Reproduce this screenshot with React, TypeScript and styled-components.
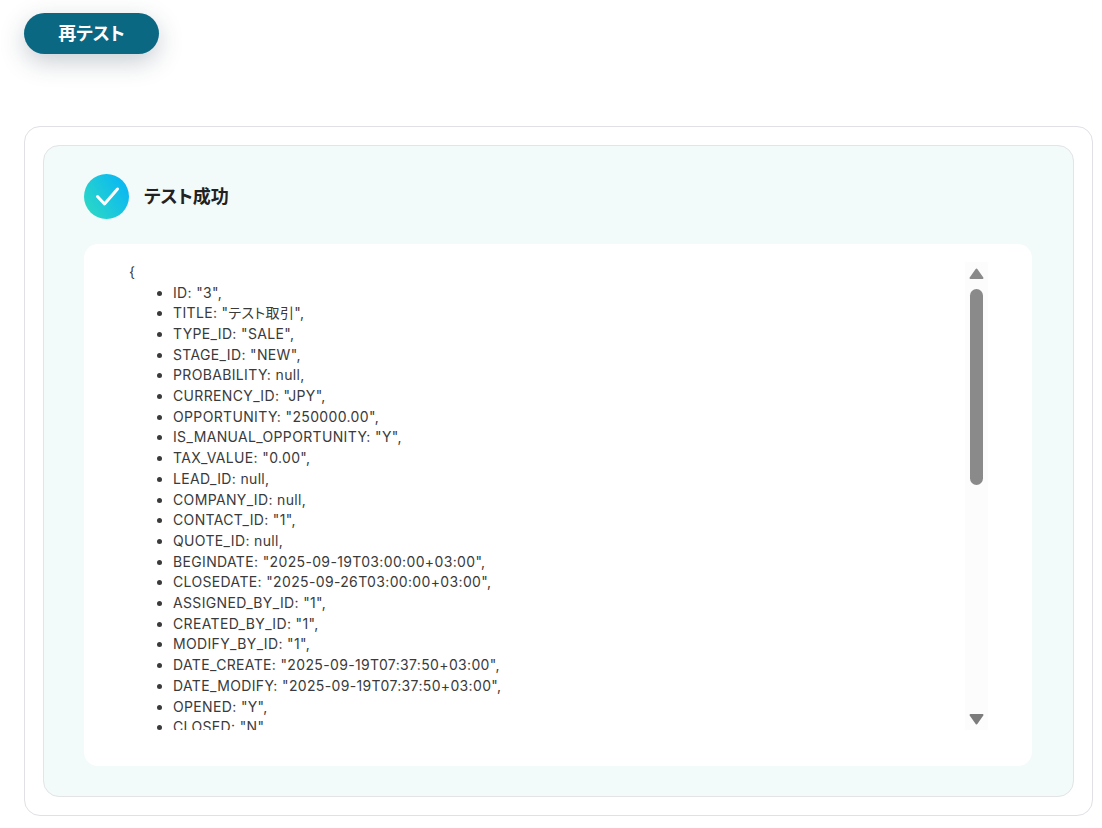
import styled, {createGlobalStyle} from "styled-components"

const GlobalStyle = createGlobalStyle`
  html, body {
    margin: 0;
    padding: 0;
    background: #fff;
  }
  body {
    font-family: Inter, "Noto Sans CJK JP", sans-serif;
    font-feature-settings: "palt";
    color: #2a2a2a;
  }
`

const Page = styled.div`
  width: 1102px;
  height: 828px;
  overflow: hidden;
  box-sizing: border-box;
  padding: 13px 9px 0 24px;
`

const RetestButton = styled.button`
  display: block;
  width: 135px;
  height: 41px;
  padding: 0 0 4px;
  border: none;
  border-radius: 21px;
  background: #0b6883;
  color: #fff;
  font-family: Inter, "Noto Sans CJK JP", sans-serif;
  font-feature-settings: "palt";
  font-size: 18px;
  font-weight: 700;
  box-shadow: 0 8px 24px rgba(40, 60, 80, 0.25);
`

const OuterCard = styled.section`
  margin-top: 72px;
  box-sizing: border-box;
  height: 690px;
  padding: 18px;
  border: 1px solid #e0e0e6;
  border-radius: 16px;
  background: #fff;
`

const ResultPanel = styled.div`
  box-sizing: border-box;
  height: 652px;
  padding: 28px 41px 30px 40px;
  border: 1px solid #e2e4e6;
  border-radius: 16px;
  background: #f2fafa;
`

const ResultHeader = styled.div`
  display: flex;
  align-items: center;
  gap: 15px;
  height: 45px;
`

const StatusIcon = styled.svg`
  width: 45px;
  height: 45px;
  flex: none;
`

const ResultTitle = styled.h2`
  margin: 0 0 3px;
  font-size: 18px;
  font-weight: 700;
  color: #222;
`

const OutputBox = styled.div`
  margin-top: 25px;
  box-sizing: border-box;
  height: 522px;
  padding: 18px 44px 36px 45px;
  display: flex;
  border-radius: 14px;
  background: #fff;
`

const OutputText = styled.div`
  flex: 1;
  height: 468px;
  overflow: hidden;
  font-size: 14px;
  letter-spacing: 0.35px;
  line-height: 20.7px;
  color: #3a3a3a;
`

const Brace = styled.div`
  height: 20.5px;
`

const FieldList = styled.ul`
  margin: 0;
  padding: 0 0 0 44px;
`

const ScrollTrack = styled.div`
  position: relative;
  width: 23px;
  height: 468px;
  flex: none;
  background: #fcfcfc;
`

const ScrollArrow = styled.svg<{$bottom?: boolean}>`
  position: absolute;
  left: 4px;
  width: 15px;
  height: 12px;
  ${props => (props.$bottom ? "bottom: 5px;" : "top: 6px;")}
`

const ScrollThumb = styled.div`
  position: absolute;
  left: 5px;
  top: 27px;
  width: 13px;
  height: 196px;
  border-radius: 7px;
  background: #8a8a8a;
`

const fields = [
  'ID: "3",',
  'TITLE: "テスト取引",',
  'TYPE_ID: "SALE",',
  'STAGE_ID: "NEW",',
  "PROBABILITY: null,",
  'CURRENCY_ID: "JPY",',
  'OPPORTUNITY: "250000.00",',
  'IS_MANUAL_OPPORTUNITY: "Y",',
  'TAX_VALUE: "0.00",',
  "LEAD_ID: null,",
  "COMPANY_ID: null,",
  'CONTACT_ID: "1",',
  "QUOTE_ID: null,",
  'BEGINDATE: "2025-09-19T03:00:00+03:00",',
  'CLOSEDATE: "2025-09-26T03:00:00+03:00",',
  'ASSIGNED_BY_ID: "1",',
  'CREATED_BY_ID: "1",',
  'MODIFY_BY_ID: "1",',
  'DATE_CREATE: "2025-09-19T07:37:50+03:00",',
  'DATE_MODIFY: "2025-09-19T07:37:50+03:00",',
  'OPENED: "Y",',
  'CLOSED: "N",',
  "COMMENTS: null,"
]

export default function App() {
  return (
    <Page>
      <GlobalStyle />
      <RetestButton>再テスト</RetestButton>
      <OuterCard>
        <ResultPanel>
          <ResultHeader>
            <StatusIcon viewBox="0 0 45 45">
              <defs>
                <linearGradient id="statusGradient" x1="0" y1="1" x2="1" y2="0.35">
                  <stop offset="0" stopColor="#2fdcc0" />
                  <stop offset="1" stopColor="#0bb8f2" />
                </linearGradient>
              </defs>
              <circle cx="22.5" cy="22.5" r="22.5" fill="url(#statusGradient)" />
              <path d="M13.5 22.5 20.5 30 33.5 15" fill="none" stroke="#fff" strokeWidth="3" strokeLinecap="round" strokeLinejoin="round" />
            </StatusIcon>
            <ResultTitle>テスト成功</ResultTitle>
          </ResultHeader>
          <OutputBox>
            <OutputText>
              <Brace>{"{"}</Brace>
              <FieldList>
                {fields.map(field => (
                  <li key={field}>{field}</li>
                ))}
              </FieldList>
            </OutputText>
            <ScrollTrack>
              <ScrollArrow viewBox="0 0 15 12">
                <path d="M7.5 1.5 13.5 10H1.5Z" fill="#8a8a8a" stroke="#8a8a8a" strokeWidth="2" strokeLinejoin="round" />
              </ScrollArrow>
              <ScrollThumb />
              <ScrollArrow $bottom viewBox="0 0 15 12">
                <path d="M1.5 2H13.5L7.5 10.5Z" fill="#7c7c7c" stroke="#7c7c7c" strokeWidth="2" strokeLinejoin="round" />
              </ScrollArrow>
            </ScrollTrack>
          </OutputBox>
        </ResultPanel>
      </OuterCard>
    </Page>
  )
}
